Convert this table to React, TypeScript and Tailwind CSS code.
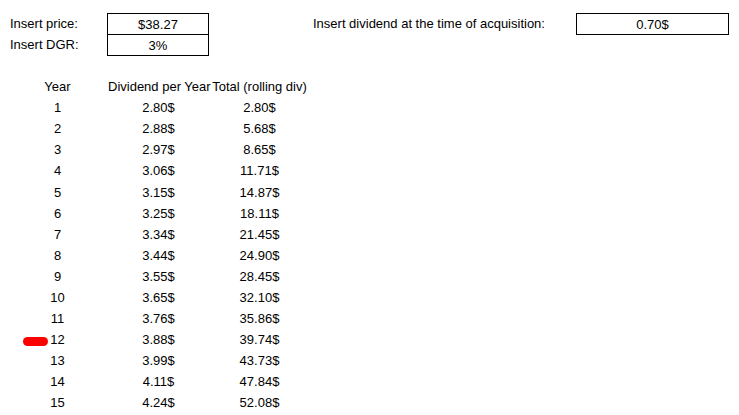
const rows: [number, string, string][] = [
  [1, '2.80$', '2.80$'],
  [2, '2.88$', '5.68$'],
  [3, '2.97$', '8.65$'],
  [4, '3.06$', '11.71$'],
  [5, '3.15$', '14.87$'],
  [6, '3.25$', '18.11$'],
  [7, '3.34$', '21.45$'],
  [8, '3.44$', '24.90$'],
  [9, '3.55$', '28.45$'],
  [10, '3.65$', '32.10$'],
  [11, '3.76$', '35.86$'],
  [12, '3.88$', '39.74$'],
  [13, '3.99$', '43.73$'],
  [14, '4.11$', '47.84$'],
  [15, '4.24$', '52.08$'],
];

export default function App() {
  return (
    <div
      className="w-[739px] h-[415px] bg-white text-black text-[13px] leading-none pt-[13px] overflow-hidden"
      style={{ fontFamily: '"Liberation Sans", Arial, sans-serif' }}
    >
      {/* Inputs */}
      <div className="flex items-center h-[21px]">
        <div className="ml-[7px] w-[100px] pl-[3px]">Insert price:</div>
        <div className="w-[102px] h-[22px] border border-black flex items-center justify-center self-start">$38.27</div>
        <div className="ml-[104px] w-[263px]">Insert dividend at the time of acquisition:</div>
        <div className="w-[153px] h-[22px] border border-black flex items-center justify-center self-start">0.70$</div>
      </div>
      <div className="flex items-center h-[21px]">
        <div className="ml-[7px] w-[100px] pl-[3px]">Insert DGR:</div>
        <div className="w-[102px] h-[22px] border border-black flex items-center justify-center self-start">3%</div>
      </div>
      <div className="h-[21px]" />

      {/* Table */}
      <div className="flex items-center h-[21.1px]">
        <div className="ml-[7px] w-[101px] text-center">Year</div>
        <div className="w-[101px] text-center whitespace-nowrap">Dividend per Year</div>
        <div className="w-[101px] text-center whitespace-nowrap">Total (rolling div)</div>
      </div>
      {rows.map(([year, div, total]) => (
        <div key={year} className="relative flex items-center h-[21.1px]">
          {year === 12 && (
            <div className="absolute left-[23px] top-[8px] w-[25px] h-[9px] rounded-full bg-[#ff0000]" />
          )}
          <div className="ml-[7px] w-[101px] text-center">{year}</div>
          <div className="w-[101px] text-center">{div}</div>
          <div className="w-[101px] text-center">{total}</div>
        </div>
      ))}
    </div>
  );
}
